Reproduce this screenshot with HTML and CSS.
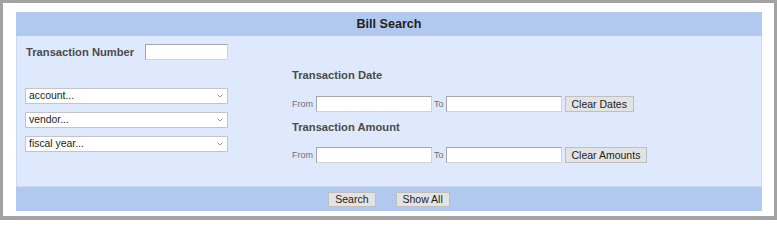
FILE: index.html
```html
<!DOCTYPE html>
<html>
<head>
<meta charset="utf-8">
<link rel="stylesheet" href="styles.css">
</head>
<body>
<div class="frame">
  <div class="panel">
    <div class="head">Bill Search</div>
    <div class="main">
      <div class="left">
        <div class="num-row">
          <span class="label">Transaction Number</span>
          <input class="txt num" type="text">
        </div>
        <div class="selects">
          <div class="sel"><span class="sel-text">account...</span><svg class="chev" width="6" height="4" viewBox="0 0 6 4"><path d="M0.5 0.5 L3 3 L5.5 0.5" fill="none" stroke="#9a9a9a" stroke-width="1"/></svg></div>
          <div class="sel"><span class="sel-text">vendor...</span><svg class="chev" width="6" height="4" viewBox="0 0 6 4"><path d="M0.5 0.5 L3 3 L5.5 0.5" fill="none" stroke="#9a9a9a" stroke-width="1"/></svg></div>
          <div class="sel"><span class="sel-text">fiscal year...</span><svg class="chev" width="6" height="4" viewBox="0 0 6 4"><path d="M0.5 0.5 L3 3 L5.5 0.5" fill="none" stroke="#9a9a9a" stroke-width="1"/></svg></div>
        </div>
      </div>
      <div class="right">
        <div class="label heading h1">Transaction Date</div>
        <div class="range r1">
          <span class="small from">From</span>
          <input class="txt wide" type="text">
          <span class="small to">To</span>
          <input class="txt wide" type="text">
          <button class="btn clear">Clear Dates</button>
        </div>
        <div class="label heading h2">Transaction Amount</div>
        <div class="range r2">
          <span class="small from">From</span>
          <input class="txt wide" type="text">
          <span class="small to">To</span>
          <input class="txt wide" type="text">
          <button class="btn clear">Clear Amounts</button>
        </div>
      </div>
    </div>
    <div class="foot">
      <button class="btn">Search</button>
      <button class="btn">Show All</button>
    </div>
  </div>
</div>
</body>
</html>
```
FILE: styles.css
```css
html, body {
  margin: 0;
  padding: 0;
  background: #ffffff;
}
.frame {
  box-sizing: border-box;
  width: 777px;
  height: 220px;
  border: 3px solid #a3a3a3;
  border-bottom-width: 4px;
  background: #ffffff;
  padding: 9px 12px 0 13px;
  font-family: "Liberation Sans", Arial, sans-serif;
}
.panel {
  width: 746px;
}
.head {
  height: 24px;
  line-height: 24px;
  background: #b1c9ee;
  text-align: center;
  font-weight: bold;
  font-size: 12.6px;
  color: #222222;
}
.main {
  box-sizing: border-box;
  height: 151px;
  background: #dee9fd;
  border-left: 1px solid #cbdaf4;
  border-right: 1px solid #cbdaf4;
  border-bottom: 1px solid #c9d9f3;
  display: flex;
  padding-left: 8px;
}
.left {
  width: 267px;
  padding-top: 8px;
}
.label {
  font-weight: bold;
  font-size: 11.2px;
  color: #4b4b4b;
}
.num-row {
  display: flex;
  align-items: center;
  height: 16px;
  padding-left: 1px;
}
.num-row .label {
  margin-right: 11px;
}
.txt {
  box-sizing: border-box;
  height: 16px;
  margin: 0;
  padding: 0 2px;
  background: #ffffff;
  border: 1px solid;
  border-color: #a6a6a6 #d2d2d2 #d2d2d2 #a6a6a6;
  outline: none;
}
.num {
  width: 83px;
}
.selects {
  margin-top: 28px;
  display: flex;
  flex-direction: column;
  gap: 8px;
}
.sel {
  box-sizing: border-box;
  width: 203px;
  height: 16px;
  background: #ffffff;
  border: 1px solid #c4c4c4;
  display: flex;
  align-items: center;
  justify-content: space-between;
  padding: 0 4px 0 3px;
}
.sel-text {
  font-size: 10.4px;
  color: #222222;
  line-height: 14px;
}
.chev {
  display: block;
}
.right {
  padding-top: 32px;
}
.heading {
  height: 14px;
  line-height: 14px;
}
.range {
  display: flex;
  align-items: center;
  height: 16px;
}
.r1 {
  margin-top: 14px;
}
.h2 {
  margin-top: 8px;
}
.r2 {
  margin-top: 13px;
}
.small {
  font-size: 9px;
  color: #707070;
}
.from {
  margin-right: 3px;
}
.to {
  margin: 0 2px 0 2px;
}
.wide {
  width: 116px;
}
.btn {
  box-sizing: border-box;
  margin: 0;
  height: 16px;
  padding: 0 6px;
  font-family: "Liberation Sans", Arial, sans-serif;
  font-size: 10.5px;
  color: #222222;
  background: #e3e3e3;
  border: 1px solid #bfbfbf;
  line-height: 14px;
}
.clear {
  margin-left: 3px;
}
.foot {
  height: 24px;
  background: #b1c9ee;
  display: flex;
  justify-content: center;
  align-items: center;
  gap: 20px;
  padding-left: 0;
}
.foot .btn {
  height: 15px;
  line-height: 13px;
}
```
